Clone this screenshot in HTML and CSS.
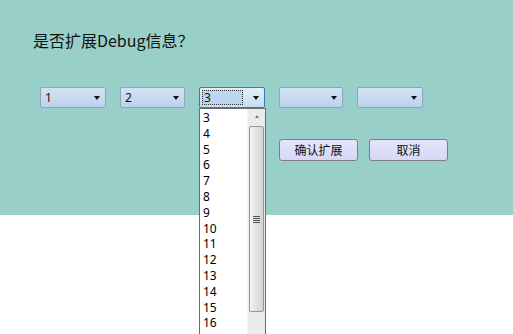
FILE: index.html
```html
<!DOCTYPE html>
<html lang="zh">
<head>
<meta charset="utf-8">
<link rel="stylesheet" href="styles.css">
</head>
<body>
<div class="panel">
  <div class="title">是否扩展Debug信息？</div>
  <div class="selects">
    <div class="sel w66"><span class="val">1</span><span class="arrow"></span></div>
    <div class="sel w65"><span class="val">2</span><span class="arrow"></span></div>
    <div class="sel w66 focused">
      <span class="val focus">3</span><span class="arrow"></span>
      <div class="list">
        <ul class="items">
          <li>3</li><li>4</li><li>5</li><li>6</li><li>7</li><li>8</li><li>9</li>
          <li>10</li><li>11</li><li>12</li><li>13</li><li>14</li><li>15</li><li>16</li>
        </ul>
        <div class="scroll">
          <div class="up"></div>
          <div class="thumb"><div class="grip"></div></div>
        </div>
      </div>
    </div>
    <div class="sel w64"><span class="val"></span><span class="arrow"></span></div>
    <div class="sel w66"><span class="val"></span><span class="arrow"></span></div>
  </div>
  <div class="buttons">
    <button class="btn">确认扩展</button>
    <button class="btn">取消</button>
  </div>
</div>
</body>
</html>
```
FILE: styles.css
```css
html, body {
  margin: 0;
  padding: 0;
  background: #ffffff;
  overflow: hidden;
  height: 334px;
}
body {
  font-family: "Noto Sans", "Noto Sans CJK SC", sans-serif;
  color: #000;
}
.panel {
  background: #98cfc9;
  height: 215px;
  padding: 29px 0 0 33px;
  box-sizing: border-box;
}
.title {
  font-family: "Noto Sans CJK SC", sans-serif;
  font-size: 16px;
  line-height: 22px;
  color: #111;
}
.selects {
  display: flex;
  margin-top: 36px;
  margin-left: 7px;
  gap: 14px;
}
.sel {
  position: relative;
  height: 21px;
  box-sizing: border-box;
  border: 1px solid #8ea4ba;
  border-radius: 2px;
  background: linear-gradient(#d3e2f3, #bcd2ec);
  display: flex;
  align-items: center;
  justify-content: space-between;
  padding: 0 4px 0 2px;
}
.w66 { width: 66px; }
.w65 { width: 65px; }
.w64 { width: 64px; }
.sel.focused {
  border-color: #3d7bad;
  background: linear-gradient(#e3f0fb, #c4ddf3);
}
.val {
  font-size: 12px;
  line-height: 15px;
  color: #111;
  padding-left: 2px;
}
.val.focus {
  width: 41px;
  height: 15px;
  box-sizing: border-box;
  border: 1px dotted #333;
  background: #bcd6f0;
  padding-left: 1px;
  line-height: 13px;
}
.arrow {
  width: 0;
  height: 0;
  border-left: 3px solid transparent;
  border-right: 3px solid transparent;
  border-top: 4px solid #111;
  margin-right: 1px;
}
.list {
  position: absolute;
  left: -1px;
  top: 20px;
  width: 67px;
  height: 226px;
  box-sizing: border-box;
  background: #fff;
  border: 1px solid #6b6b6b;
  border-bottom: none;
  display: flex;
  z-index: 2;
}
.items {
  list-style: none;
  margin: 0;
  padding: 1px 0 0 3px;
  flex: 1;
  font-size: 12px;
  line-height: 15.8px;
}
.scroll {
  width: 17px;
  background: #ebebeb;
  border-left: 1px solid #f2f2f2;
  display: flex;
  flex-direction: column;
  align-items: center;
}
.up {
  width: 0;
  height: 0;
  border-left: 2px solid transparent;
  border-right: 2px solid transparent;
  border-bottom: 3px solid #7a7a7a;
  margin-top: 6px;
}
.thumb {
  margin-top: 8px;
  width: 15px;
  height: 186px;
  box-sizing: border-box;
  border: 1px solid #959595;
  border-radius: 2px;
  background: linear-gradient(90deg, #f4f4f4, #e2e2e2 50%, #d4d4d4);
  display: flex;
  align-items: center;
  justify-content: center;
}
.grip {
  width: 7px;
  height: 7px;
  background: repeating-linear-gradient(#555 0 1px, transparent 1px 2px);
}
.buttons {
  display: flex;
  gap: 11px;
  margin-top: 31px;
  margin-left: 246px;
}
.btn {
  width: 79px;
  height: 22px;
  box-sizing: border-box;
  border: 1px solid #7d7d8c;
  border-radius: 3px;
  background: linear-gradient(#e4e4fa, #d8d8f6);
  font-family: "Noto Sans CJK SC", sans-serif;
  font-size: 12px;
  line-height: 18px;
  color: #111;
  padding: 0;
}
```
